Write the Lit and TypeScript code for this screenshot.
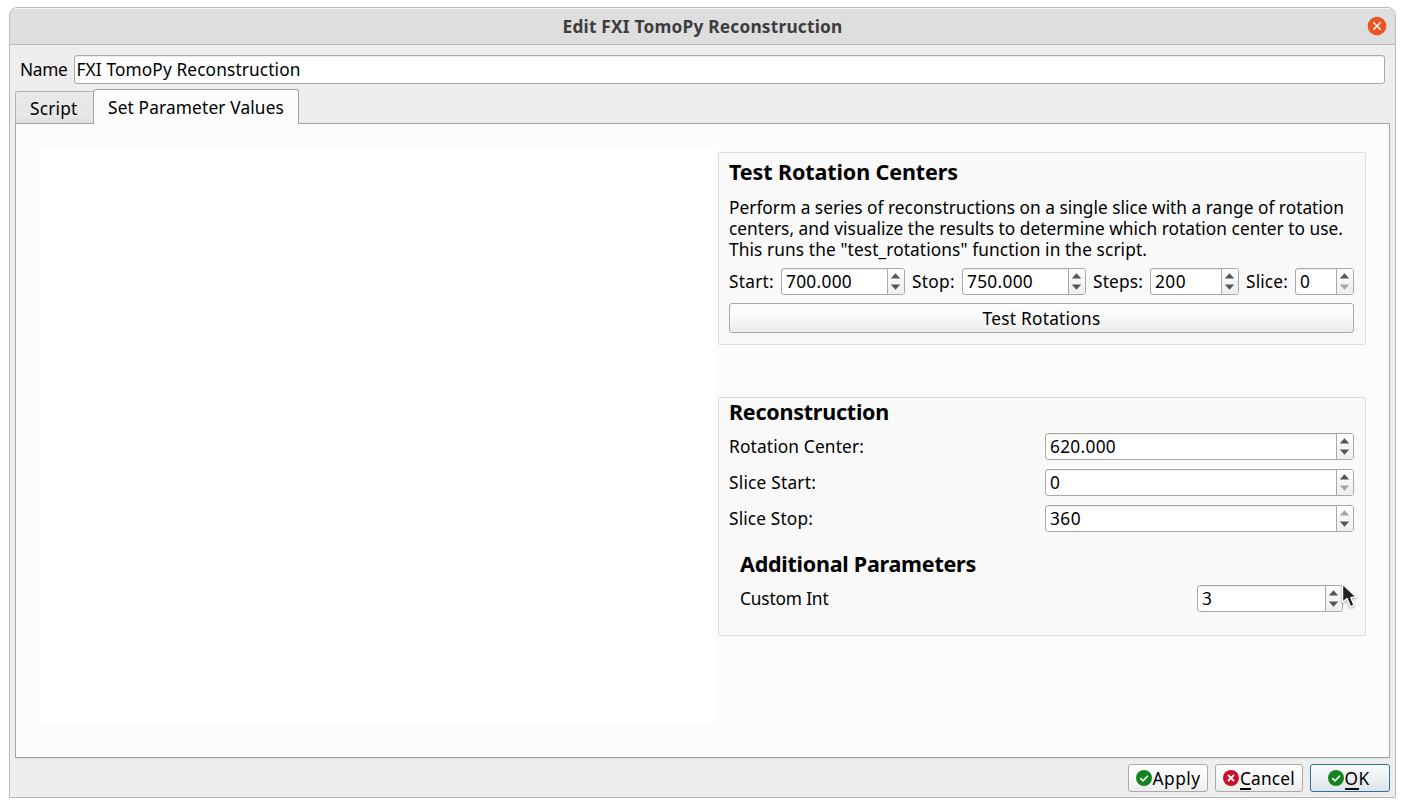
import { LitElement, html, css, svg } from "lit";
import { customElement, property } from "lit/decorators.js";

/* A run of text whose tracking is adjusted so that it takes a given advance width. */
@customElement("fit-text")
class FitText extends LitElement {
  static styles = css`
    :host { display: inline-block; white-space: pre; flex: none; }
  `;
  @property({ type: Number }) w = 0;
  @property() text = "";
  firstUpdated() {
    const run = this.renderRoot.querySelector("span")!;
    const natural = run.getBoundingClientRect().width;
    run.style.letterSpacing = (this.w - natural) / this.text.length + "px";
    this.style.width = this.w + "px";
  }
  render() {
    return html`<span>${this.text}</span>`;
  }
}

@customElement("spin-box")
class SpinBox extends LitElement {
  static styles = css`
    :host {
      display: flex; box-sizing: border-box; height: 27px; flex: none;
      border: 1px solid #a9a9a9; border-radius: 3px; overflow: hidden;
      background: #fff; box-shadow: inset 0 1px 0 #ececec;
    }
    .value { flex: 1; padding-left: 4px; line-height: 26px; }
    .arrows {
      width: 16px; border-left: 1px solid #a9a9a9;
      background: linear-gradient(#fdfdfd, #eeeeee);
    }
    svg { display: block; }
    .on { fill: #555; }
    .off { fill: #a6a6a6; }
  `;
  @property() value = "";
  @property({ type: Number }) w = 0;
  @property() off = "";
  render() {
    return html`
      <div class="value"><fit-text .text=${this.value} .w=${this.w}></fit-text></div>
      <div class="arrows">
        <svg width="16" height="25" viewBox="0 0 16 25">
          <path class=${this.off === "up" ? "off" : "on"} d="M7.5 4.3L12.2 9.6H2.8Z" />
          <path class=${this.off === "down" ? "off" : "on"} d="M7.5 20.7L12.2 15.4H2.8Z" />
        </svg>
      </div>`;
  }
}

const okIcon = html`<svg class="ico" width="16" height="16" viewBox="0 0 16 16">
  ${svg`<circle cx="8" cy="8" r="8" fill="#148420"/><path d="M4.3 8.2L7 10.8L12 5.8" fill="none" stroke="#fff" stroke-width="1.6"/>`}</svg>`;
const cancelIcon = html`<svg class="ico" width="16" height="16" viewBox="0 0 16 16">
  ${svg`<circle cx="8" cy="8" r="8" fill="#c8102e"/><path d="M5 5L11 11M11 5L5 11" fill="none" stroke="#fff" stroke-width="1.8"/>`}</svg>`;

@customElement("app-root")
class AppRoot extends LitElement {
  static styles = css`
    * { box-sizing: border-box; }
    :host {
      display: block; height: 807px; padding: 7px 9px 9px; box-sizing: border-box;
      background: #fff; color: #000; overflow: hidden;
      font: 17.3px/21px "Noto Sans", sans-serif;
    }
    .window {
      height: 791px; border: 1px solid #bababa; border-radius: 8px 8px 0 0;
      background: #eeeeee; display: flex; flex-direction: column; overflow: hidden;
    }
    .title {
      height: 37px; background: #dedede; border-top: 1px solid #f4f4f4;
      border-bottom: 1px solid #b8b8b8; display: grid; padding-bottom: 1px;
      grid-template-columns: 36px 1fr 36px; align-items: center; justify-items: center;
      font-weight: 700; color: #3d3d3d; flex: none;
    }
    .title svg { display: block; }
    .name { display: flex; height: 29px; margin: 10px 10px 0 10px; line-height: 29px; flex: none; }
    .name .input {
      flex: 1; margin-left: 6px; padding-left: 2px; line-height: 28px; background: #fff;
      border: 1px solid #a9a9a9; border-radius: 3px; box-shadow: inset 0 1px 0 #ececec;
    }
    .tabs { display: flex; align-items: flex-end; height: 35px; margin: 5px 5px -1px; flex: none; z-index: 1; }
    .tab {
      height: 33px; width: 78px; padding-left: 14px; line-height: 34px;
      border: 1px solid #b4b4b4; border-right: 0; border-bottom-color: #a5a5a5;
      border-radius: 3px 0 0 0; background: linear-gradient(#e9e9e9, #e6e6e6 80%, #dcdcdc);
    }
    .tab.active {
      height: 35px; width: 206px; line-height: 35px; background: #fcfcfc;
      border: 1px solid #a5a5a5; border-bottom: 0; border-radius: 3px 3px 0 0;
    }
    .panel {
      height: 635px; margin: 0 5px; background: #fcfcfc; border: 1px solid #a5a5a5;
      box-shadow: 0 1px 0 #e0e0e0; display: flex; padding: 23px 23px 0; flex: none;
    }
    .plot { width: 676px; height: 576px; background: #fff; flex: none; }
    .side { padding: 5px 0 0 3px; }
    .group {
      width: 648px; background: #f9f9f9; border: 1px solid #dcdcdc; border-radius: 2px;
      padding: 0 11px 0 10px;
    }
    .g1 { height: 193px; margin-bottom: 52px; padding-top: 5px; }
    .g2 { height: 239px; }
    .head { font-size: 21.5px; line-height: 28px; font-weight: 700; height: 28px; }
    .gap { height: 7px; }
    .para { padding-top: 11px; height: 74px; }
    .line { display: block; height: 21px; }
    .spins { display: flex; height: 27px; line-height: 27px; margin-top: 8px; }
    .sep { width: 7px; }
    .btn {
      display: flex; align-items: center; justify-content: center;
      border: 1px solid #a9a9a9; border-radius: 3px;
      background: linear-gradient(#fefefe, #fafafa 40%, #ececec);
    }
    .test { height: 30px; margin-top: 8px; }
    .field { display: flex; justify-content: space-between; height: 27px; line-height: 27px; margin-bottom: 9px; }
    .extra { padding: 9px 11px 0; }
    .footer { display: flex; justify-content: flex-end; padding: 6px 5px 0; gap: 7px; }
    .footer .btn { height: 28px; }
    .ico { display: block; flex: none; margin-right: 1px; }
    .key { border-bottom: 2px solid #000; height: 23px; margin-top: 1px; line-height: 23px; }
    .rest { height: 23px; margin-top: 1px; line-height: 23px; }
    .apply { width: 80px; }
    .cancel { width: 88px; }
    .ok { width: 80px; padding-right: 2px; border-color: #2e719d; background: linear-gradient(#fbfcfd, #f0f3f5 40%, #dde3e8); }
    .pointer { position: absolute; left: 1339px; top: 580px; display: block; filter: drop-shadow(0 1px 1px rgba(0,0,0,.35)); }
  `;
  t(text: string, w: number) {
    return html`<fit-text .text=${text} .w=${w}></fit-text>`;
  }
  spin(value: string, textWidth: number, width: number, off = "") {
    return html`<spin-box style="width:${width}px" .value=${value} .w=${textWidth} .off=${off}></spin-box>`;
  }
  label(text: string, w: number, space: number) {
    return html`<span style="width:${space}px">${this.t(text, w)}</span>`;
  }
  render() {
    return html`
      <div class="window">
        <div class="title">
          <span></span>${this.t("Edit FXI TomoPy Reconstruction", 280)}
          <svg width="20" height="20" viewBox="0 0 20 20">
            <circle cx="10" cy="10" r="9.3" fill="#e95420" />
            <path d="M6.3 6.3L13.7 13.7M13.7 6.3L6.3 13.7" stroke="#fff" stroke-width="1.4" />
          </svg>
        </div>
        <div class="name">
          ${this.t("Name", 47.5)}
          <div class="input">${this.t("FXI TomoPy Reconstruction", 224)}</div>
        </div>
        <div class="tabs">
          <div class="tab">${this.t("Script", 47.5)}</div>
          <div class="tab active">${this.t("Set Parameter Values", 176)}</div>
        </div>
        <div class="panel">
          <div class="plot"></div>
          <div class="side">
            <div class="group g1">
              <div class="head">${this.t("Test Rotation Centers", 229)}</div>
              <div class="para">
                <span class="line">${this.t("Perform a series of reconstructions on a single slice with a range of rotation", 615)}</span>
                <span class="line">${this.t("centers, and visualize the results to determine which rotation center to use.", 614)}</span>
                <span class="line">${this.t('This runs the "test_rotations" function in the script.', 418)}</span>
              </div>
              <div class="spins">
                ${this.label("Start:", 45, 52)}${this.spin("700.000", 66, 124)}
                <span class="sep"></span>
                ${this.label("Stop:", 43, 50)}${this.spin("750.000", 66, 124)}
                <span class="sep"></span>
                ${this.label("Steps:", 50, 57)}${this.spin("200", 31, 89)}
                <span class="sep"></span>
                ${this.label("Slice:", 42, 49)}${this.spin("0", 10, 59, "down")}
              </div>
              <div class="btn test">${this.t("Test Rotations", 118)}</div>
            </div>
            <div class="group g2">
              <div class="head">${this.t("Reconstruction", 160)}</div>
              <div class="gap"></div>
              <div class="field">${this.t("Rotation Center:", 135)}${this.spin("620.000", 66, 309)}</div>
              <div class="field">${this.t("Slice Start:", 87)}${this.spin("0", 10, 309, "down")}</div>
              <div class="field">${this.t("Slice Stop:", 84)}${this.spin("360", 31, 309, "up")}</div>
              <div class="extra">
                <div class="head">${this.t("Additional Parameters", 236)}</div>
                <div class="gap"></div>
                <div class="field">${this.t("Custom Int", 88.5)}${this.spin("3", 10, 146)}</div>
              </div>
            </div>
          </div>
        </div>
        <div class="footer">
          <div class="btn apply">${okIcon}<span class="rest">${this.t("Apply", 48)}</span></div>
          <div class="btn cancel">${cancelIcon}<span class="key">${this.t("C", 11)}</span><span class="rest">${this.t("ancel", 44)}</span></div>
          <div class="btn ok">${okIcon}<span class="key">${this.t("O", 14)}</span><span class="rest">${this.t("K", 12)}</span></div>
        </div>
      </div>
      <svg class="pointer" width="20" height="31" viewBox="0 0 20 31">
        <path d="M3.5 4V22.2L8 18.6L11.5 26.8L15 25.2L11.8 17.6L17 16.8Z" fill="#222" stroke="#fff" stroke-width="1.4" stroke-linejoin="round" />
      </svg>`;
  }
}
